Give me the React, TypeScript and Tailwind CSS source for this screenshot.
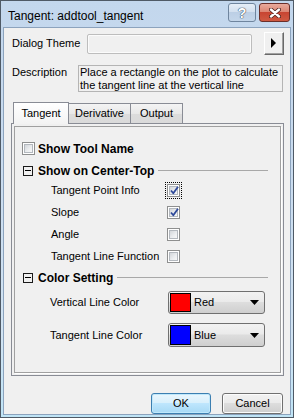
import React from "react";

const font = { fontFamily: '"Liberation Sans", Arial, sans-serif' };

function Check({ checked, focus }: { checked?: boolean; focus?: boolean }) {
  return (
    <div
      className={
        "w-[13px] h-[13px] border border-[#8e8f8f] bg-white p-[1px] shrink-0 " +
        (focus ? "outline outline-1 outline-dotted outline-black outline-offset-1" : "")
      }
    >
      <div className="relative w-full h-full border border-[#b3b8be] bg-[linear-gradient(135deg,#d3d6da_0%,#eceef0_60%,#f7f7f7_100%)]">
        {checked && (
          <svg className="absolute left-[-1px] top-[-2px]" width="11" height="11" viewBox="0 0 11 11">
            <path d="M2 5.5 L4.3 8.3 L9 1.8" fill="none" stroke="#2f4a9a" strokeWidth="1.8" strokeLinejoin="round" />
          </svg>
        )}
      </div>
    </div>
  );
}

function Minus() {
  return (
    <div className="w-[10px] h-[10px] border border-[#1a1a1a] flex items-center justify-center shrink-0">
      <div className="w-[6px] h-[1px] bg-black" />
    </div>
  );
}

function Header({ text, mt }: { text: string; mt: string }) {
  return (
    <div className={"flex items-center h-[13px] pl-[8px] pr-[12px] " + mt}>
      <Minus />
      <span className="ml-[5px] font-bold text-[12px] text-black whitespace-nowrap">{text}</span>
      <div className="flex-1 ml-[4px] h-[1px] bg-[#a8a8a8]" />
    </div>
  );
}

function OptRow({ label, checked, focus }: { label: string; checked?: boolean; focus?: boolean }) {
  return (
    <div className="flex items-center h-[22px] pl-[36px]">
      <span className="w-[116px] text-[11px] text-black whitespace-nowrap">{label}</span>
      <Check checked={checked} focus={focus} />
    </div>
  );
}

function ColorRow({ label, color, name, mt, h }: { label: string; color: string; name: string; mt: string; h: string }) {
  return (
    <div className={"flex items-center pl-[35px] " + mt}>
      <span className="w-[118px] text-[11px] text-black whitespace-nowrap">{label}</span>
      <div
        className={
          "w-[97px] rounded-[3px] border border-[#707070] flex items-center p-[1px] bg-[linear-gradient(180deg,#f2f2f2_0%,#ebebeb_45%,#dddddd_50%,#cfcfcf_100%)] " +
          h
        }
      >
        <div className="h-full w-[21px] border border-black" style={{ background: color }} />
        <span className="ml-[3px] text-[11px] text-black">{name}</span>
        <svg className="ml-auto mr-[4px]" width="9" height="5" viewBox="0 0 9 5">
          <path d="M0 0 L9 0 L4.5 5 Z" fill="#000" />
        </svg>
      </div>
    </div>
  );
}

export default function App() {
  return (
    <div
      className="w-[294px] h-[418px] border border-[#4f5a66] flex flex-col bg-[linear-gradient(180deg,#c3d7ed_0%,#cadcef_40%,#d2e4f3_80%,#bfe4f6_100%)]"
      style={font}
    >
      {/* Title bar */}
      <div className="h-[26px] flex items-start pl-[7px] pr-[3px] shrink-0">
        <span className="mt-[6px] text-[12px] text-black whitespace-nowrap">Tangent: addtool_tangent</span>
        <div className="ml-auto mt-[2px] flex gap-[3px]">
          <div className="w-[28px] h-[19px] rounded-[3px] border border-[#6f859e] flex items-center justify-center bg-[linear-gradient(180deg,#e6eef7_0%,#d3e0ef_45%,#bccfe5_50%,#c4d6ea_100%)]">
            <span className="text-[14px] font-bold leading-none text-white [text-shadow:0_0_1px_#3d4f63,0_0_1px_#3d4f63,0_0_1px_#3d4f63]">
              ?
            </span>
          </div>
          <div className="w-[31px] h-[19px] rounded-[3px] border border-[#6b2f2a] flex items-center justify-center bg-[linear-gradient(180deg,#e9aa9c_0%,#dc8674_45%,#c84532_50%,#cf5a42_100%)]">
            <svg width="12" height="10" viewBox="0 0 12 10">
              <path d="M2 1.5 L10 8.5 M10 1.5 L2 8.5" stroke="#4a1d18" strokeWidth="4" strokeLinecap="round" />
              <path d="M2 1.5 L10 8.5 M10 1.5 L2 8.5" stroke="#ffffff" strokeWidth="2.4" strokeLinecap="round" />
            </svg>
          </div>
        </div>
      </div>

      {/* Client */}
      <div className="mx-[2px] mb-[2px] flex-1 border border-[#8ca3bd] bg-[#f0f0f0] flex flex-col">
        {/* Dialog Theme */}
        <div className="mt-[4px] h-[23px] pl-[8px] flex items-center">
          <span className="w-[75px] text-[11px] text-black whitespace-nowrap">Dialog Theme</span>
          <div className="w-[165px] h-[20px] rounded-[2px] border border-[#bdbdbd] bg-[#f0f0f0] shadow-[inset_0_0_0_1px_#fbfbfb]" />
          <div className="ml-[12px] w-[20px] h-[23px] border-t border-l border-white border-r border-b border-r-[#696969] border-b-[#696969] bg-[#f0f0f0]">
            <div className="w-full h-full border-r border-b border-[#a0a0a0] flex items-center justify-center">
              <svg width="5" height="10" viewBox="0 0 5 10">
                <path d="M0 0 L5 5 L0 10 Z" fill="#000" />
              </svg>
            </div>
          </div>
        </div>

        {/* Description */}
        <div className="mt-[10px] pl-[8px] flex items-start">
          <span className="w-[66px] text-[11px] leading-[14px] text-black whitespace-nowrap">Description</span>
          <div className="w-[205px] h-[27px] border border-[#b4b4b4] pl-[1px] text-[11px] leading-[12.5px] text-black">
            Place a rectangle on the plot to calculate the tangent line at the vertical line
          </div>
        </div>

        {/* Tabs */}
        <div className="mt-[10px] ml-[7px] flex flex-col">
          <div className="flex items-end pl-[2px] h-[21px]">
            <div className="relative z-10 -mb-[1px] w-[56px] h-[22px] border border-b-0 border-[#898c95] bg-[linear-gradient(180deg,#ffffff_0%,#f3f3f3_100%)] flex items-center justify-center">
              <span className="text-[11px] text-black">Tangent</span>
            </div>
            <div className="w-[62px] h-[20px] border border-l-0 border-b-0 border-[#898c95] bg-[linear-gradient(180deg,#f4f4f4_0%,#e8e8e8_50%,#dcdcdc_51%,#dadada_100%)] flex items-center justify-center">
              <span className="text-[11px] text-black">Derivative</span>
            </div>
            <div className="w-[52px] h-[20px] border border-l-0 border-b-0 border-[#898c95] bg-[linear-gradient(180deg,#f4f4f4_0%,#e8e8e8_50%,#dcdcdc_51%,#dadada_100%)] flex items-center justify-center">
              <span className="text-[11px] text-black">Output</span>
            </div>
          </div>
          <div className="w-[273px] h-[253px] border border-[#898c95] bg-[#f0f0f0] p-[2px] flex">
            <div className="flex-1 border border-[#a0a0a0] shadow-[1px_1px_0_0_#ffffff] flex flex-col">
              <div className="mt-[15px] pl-[7px] flex items-center h-[13px]">
                <Check />
                <span className="ml-[3px] font-bold text-[12px] text-black whitespace-nowrap">Show Tool Name</span>
              </div>
              <Header text="Show on Center-Top" mt="mt-[9px]" />
              <div className="mt-[2px] flex flex-col">
                <OptRow label="Tangent Point Info" checked focus />
                <OptRow label="Slope" checked />
                <OptRow label="Angle" />
                <OptRow label="Tangent Line Function" />
              </div>
              <Header text="Color Setting" mt="mt-[4px]" />
              <ColorRow label="Vertical Line Color" color="#ff0000" name="Red" mt="mt-[7px]" h="h-[23px]" />
              <ColorRow label="Tangent Line Color" color="#0000ff" name="Blue" mt="mt-[9px]" h="h-[24px]" />
            </div>
          </div>
        </div>

        {/* Buttons */}
        <div className="mt-[17px] flex justify-end pr-[7px] gap-[11px]">
          <div className="w-[60px] h-[21px] rounded-[3px] border border-[#3c7fb1] shadow-[inset_0_0_0_1px_#c0e8fb] flex items-center justify-center bg-[linear-gradient(180deg,#eaf6fd_0%,#d9f0fc_45%,#bee6fd_50%,#a7d9f5_100%)]">
            <span className="text-[11px] text-black">OK</span>
          </div>
          <div className="w-[61px] h-[21px] rounded-[3px] border border-[#707070] shadow-[inset_0_0_0_1px_#fcfcfc] flex items-center justify-center bg-[linear-gradient(180deg,#f2f2f2_0%,#ebebeb_45%,#dddddd_50%,#cfcfcf_100%)]">
            <span className="text-[11px] text-black">Cancel</span>
          </div>
        </div>
      </div>
    </div>
  );
}
